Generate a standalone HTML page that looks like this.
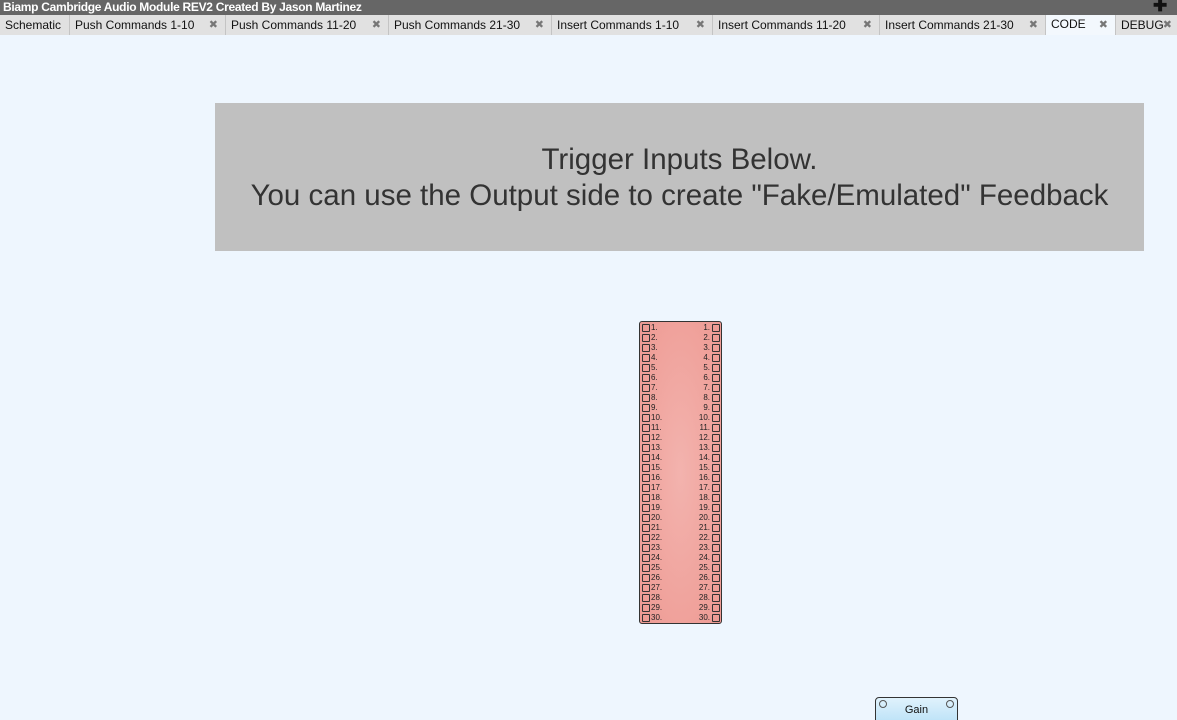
<!DOCTYPE html>
<html><head><meta charset="utf-8"><style>
html{overflow:hidden;height:720px}
body{margin:0;width:1177px;height:720px;background:#eef6fe;position:relative;overflow:hidden;font-family:"Liberation Sans",sans-serif}
#title{position:absolute;left:0;top:0;width:1177px;height:15px;background:#666;color:#fff;font-weight:bold;font-size:12px;line-height:14px;padding-left:3px;box-sizing:border-box;letter-spacing:-0.3px}
#plus{position:absolute;right:10px;top:-1px;color:#111;font-size:17px;font-weight:bold}
#tabs{position:absolute;left:0;top:15px;width:1177px;height:20px;background:#e1e1e1}
.tab{position:absolute;top:0;height:20px;font-size:12px;line-height:21px;color:#111;border-right:1px solid #c4c4c4;box-sizing:border-box;padding-left:5px;white-space:nowrap}
.tab i{font-style:normal;color:#777;font-size:11px;position:absolute;right:7px;top:0}
#banner{position:absolute;left:215px;top:103px;width:929px;height:148px;background:#c0c0c0;color:#333;font-size:29.5px;text-align:center;line-height:36px;box-sizing:border-box;padding-top:39px;white-space:nowrap}
#blk{position:absolute;left:639px;top:321px;width:83px;height:303px;border:1px solid #333;border-radius:3px;box-sizing:border-box;background:radial-gradient(ellipse at center,#f3b3ae 0%,#ee9a93 100%)}
.r{position:absolute;font-size:8px;color:#222;line-height:10px}
.sq{position:absolute;width:6px;height:6px;border:1px solid #333;border-radius:1px}
#gain{position:absolute;left:875px;top:697px;width:83px;height:30px;border:1px solid #333;border-radius:4px;box-sizing:border-box;background:linear-gradient(#e0f2fc,#b7e0f7);font-size:11px;text-align:center;line-height:24px;color:#111}
.c{position:absolute;top:2px;width:6px;height:6px;border:1px solid #555;border-radius:50%}
</style></head><body>
<div id="title">Biamp Cambridge Audio Module REV2 Created By Jason Martinez<span id="plus">✚</span></div>
<div id="tabs">
<div class="tab" style="left:0;width:70px">Schematic</div>
<div class="tab" style="left:70px;width:156px">Push Commands 1-10<i>✖</i></div>
<div class="tab" style="left:226px;width:163px">Push Commands 11-20<i>✖</i></div>
<div class="tab" style="left:389px;width:163px">Push Commands 21-30<i>✖</i></div>
<div class="tab" style="left:552px;width:161px">Insert Commands 1-10<i>✖</i></div>
<div class="tab" style="left:713px;width:167px">Insert Commands 11-20<i>✖</i></div>
<div class="tab" style="left:880px;width:166px">Insert Commands 21-30<i>✖</i></div>
<div class="tab" style="left:1046px;width:70px;background:#f3f8fd;line-height:19px">CODE<i style="top:1px">✖</i></div>
<div class="tab" style="left:1116px;width:70px;border:none">DEBUG<i style="right:14px">✖</i></div>
</div>
<div id="banner">Trigger Inputs Below.<br>You can use the Output side to create "Fake/Emulated" Feedback</div>
<div id="blk"></div>
<div id="gain">Gain<div class="c" style="left:3px"></div><div class="c" style="right:3px"></div></div>
<script>
var h='';for(var i=1;i<=30;i++){var y=323+(i-1)*10;
h+='<div class="sq" style="left:642px;top:'+(y+1)+'px"></div><div class="r" style="left:651px;top:'+y+'px">'+i+'.</div>';
h+='<div class="r" style="left:690px;width:20px;text-align:right;top:'+y+'px">'+i+'.</div><div class="sq" style="left:712px;top:'+(y+1)+'px"></div>';}
document.body.insertAdjacentHTML('beforeend',h);
</script>
</body></html>
